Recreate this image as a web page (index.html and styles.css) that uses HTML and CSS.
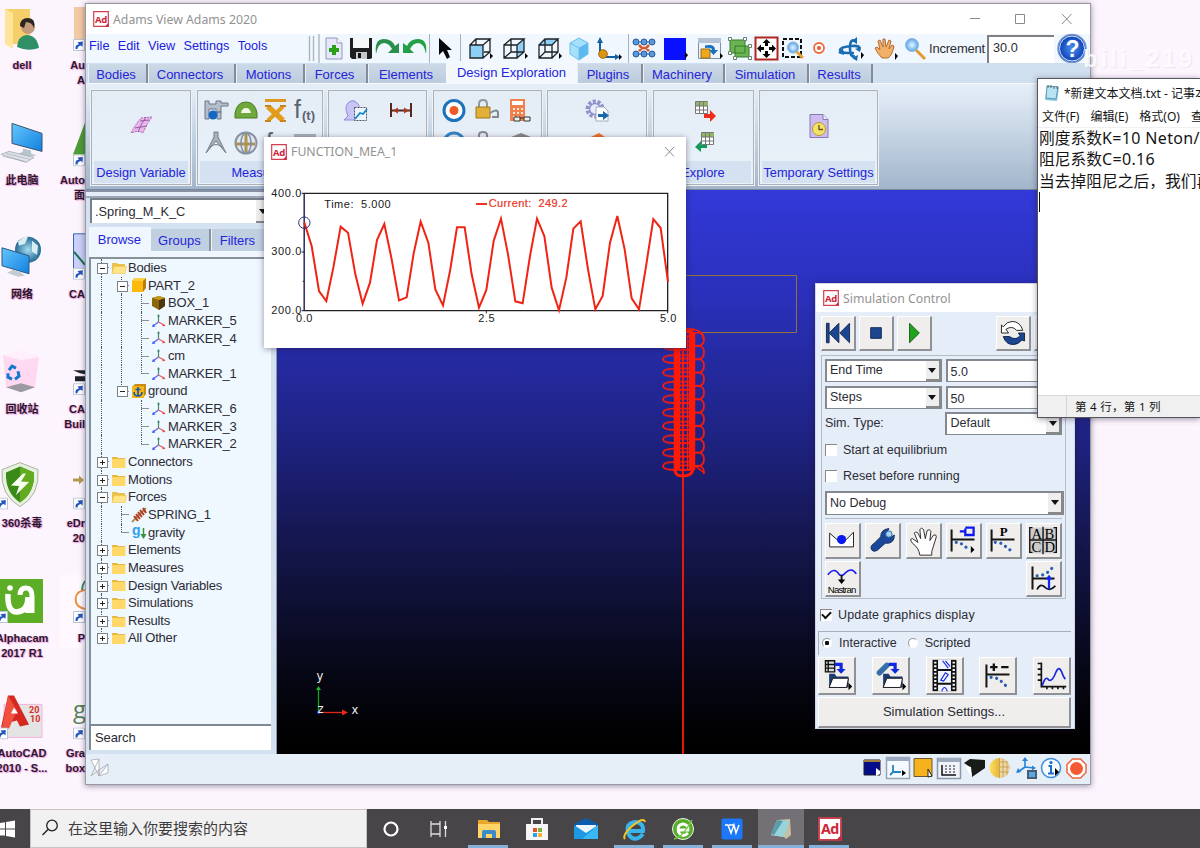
FILE: index.html
```html
<!DOCTYPE html>
<html lang="zh">
<head>
<meta charset="utf-8">
<title>Adams View Adams 2020</title>
<link rel="stylesheet" href="styles.css">
</head>
<body>
<svg class="defs" width="0" height="0">
  <defs>
    <symbol id="ad" viewBox="0 0 16 16"><path d="M.7.7h14.6v14.6H.7z" fill="#fff" stroke="#d2404f" stroke-width="1.2"/><path d="M12 15.5l3.5-3.5v3.5z" fill="#c8283c"/><text x="2" y="11.5" class="ad-text">Ad</text></symbol>
    <symbol id="folder" viewBox="0 0 17 16"><path d="M1 3h5l1 1h7v9.500H1z" fill="#e8b840"/><path d="M1 5h13.500v9H1z" fill="#ffd868"/></symbol>
    <symbol id="folder-open" viewBox="0 0 17 16"><path d="M1 3h5l1 1h7v9H1z" fill="#ecc04c"/><path d="M1 13.500L3 6.500h12.500L14 13.500z" fill="#ffe48a" stroke="#eec24e" stroke-width=".6"/></symbol>
    <symbol id="marker" viewBox="0 0 17 16"><path d="M7.500 9V2" stroke="#4a8a68" stroke-width="1.200"/><path d="M7.500 9L2 13" stroke="#5566ee" stroke-width="1.200"/><path d="M7.500 9l5.500 3" stroke="#e06060" stroke-width="1.200"/><path d="M7.500 1l1.500 2.500H6z" fill="#4a8a68"/><path d="M1 14l1-3 2.500 2.500z" fill="#4455ff"/><path d="M14.500 13l-3.500.3 1.600-2.700z" fill="#f05050"/></symbol>
    <symbol id="shortcut" viewBox="0 0 12 12"><path d="M.5.5h11v11H.5z" fill="#fff" stroke="#b8c4d8"/><path d="M2.500 10Q2 5.500 6 5.200L4.500 3.200 9.800 2.500 9.500 7.800 7.800 6.500Q4.500 7 4.500 10z" fill="#2456c0"/></symbol>
    <pattern id="coil" x="662" y="352.600" width="44" height="13.350" patternUnits="userSpaceOnUse">
      <path d="M32 6.700Q42 8 42 0M32 6.700Q42 5 42 13.350M12 2.500Q1 3 1 6.700T12 10.500M12 2.500h20M12 6h20M12 10.500h20" fill="none" stroke="#ff1a05" stroke-width="1.700"/>
    </pattern>
    <linearGradient id="gold"><stop offset="0" stop-color="#ffe060"/><stop offset="1" stop-color="#c88a10"/></linearGradient>
    <linearGradient id="screen" x2="1" y2="1"><stop offset="0" stop-color="#66c6fc"/><stop offset="1" stop-color="#1080e0"/></linearGradient>
    <radialGradient id="globe"><stop offset="0" stop-color="#a6dcf0"/><stop offset="1" stop-color="#256a94"/></radialGradient>
    <radialGradient id="help"><stop offset="0" stop-color="#4a90f0"/><stop offset="1" stop-color="#0838b0"/></radialGradient>
    <radialGradient id="lens"><stop offset="0" stop-color="#e8f6ff"/><stop offset="1" stop-color="#5aa4e8"/></radialGradient>
  </defs>
</svg>

<main class="desktop">
  <div class="shelf shelf-a">
    <div class="shortcut"><svg width="60" height="56" viewBox="-8 2 60 56"><path d="M5 9h25v35H12z" fill="#f5cf6a"/><path d="M5 9l8 4v36l-8-5z" fill="#ffe49a"/><circle cx="28" cy="27" r="7" fill="#c49a7c"/><path d="M20 26q0-8 8-8t6 10q-2-6-8-6l-2 6z" fill="#2c2622"/><path d="M17 47q1-11 9-12 11 0 13 13-11 4-22-1z" fill="#2f9068"/></svg><span>dell</span></div>
    <div class="shortcut"><svg width="60" height="56" viewBox="-8 116.600 60 56"><path d="M12 123l30 10v18l-30-8z" fill="url(#screen)" stroke="#3a556a" stroke-width="1"/><path d="M23 148l8 2v3l6 2-9 1-9-3 4-2z" fill="#b8c4cc"/><path d="M1 154l8-3 25 6-8 5z" fill="#dfe3e8" stroke="#a0a8b0" stroke-width=".8"/><path d="M6 153l24 6M3 156l22 5" stroke="#98a4b0" stroke-width=".6"/></svg><span>此电脑</span></div>
    <div class="shortcut"><svg width="60" height="56" viewBox="-8 231.200 60 56"><circle cx="28" cy="250" r="13" fill="url(#globe)"/><path d="M18 242q5-6 10-5l-3 7-6 2zM32 241l6 5-1 9-5-3z" fill="#d8ecf2"/><path d="M2 248l27 8v18l-27-8z" fill="url(#screen)" stroke="#2a5a88"/><path d="M13 270l7 2 5 4-7 1-11-4z" fill="#c4ccd2"/></svg><span>网络</span></div>
    <div class="shortcut"><svg width="60" height="56" viewBox="-8 345.800 60 56"><path d="M3 355l18-4 18 6-4 30-14 5-15-5z" fill="#ffd2f0" opacity=".85"/><path d="M3 355l18 5 18-3-18-6z" fill="#fff" opacity=".6"/><path d="M6 387l15-4 14 4-14 5z" fill="#9a9aa0"/><g fill="none" stroke="#1478d0" stroke-width="3"><path d="M9 370l3-4 4 2M18 371l1 5-4 3M12 379l-4-2v-4"/></g></svg><span>回收站</span></div>
    <div class="shortcut"><svg width="60" height="56" viewBox="-8 460.400 60 56"><path d="M20 463l18 7q2 26-18 37Q0 496 2 470z" fill="#e8f0e0" stroke="#a8b4a0"/><path d="M20 467l14 6q1 20-14 30Q5 493 6 473z" fill="#3a8a18"/><path d="M20 467l14 6q1 20-14 30z" fill="#62aa20"/><path d="M23 474l-12 12 8 .5-3 9 13-13-8-.5 5-8z" fill="#f6fff0"/><use href="#shortcut" x="-4" y="498" width="12" height="12"/></svg><span>360杀毒</span></div>
    <div class="shortcut"><svg width="60" height="56" viewBox="-8 575 60 56"><path d="M0 579h43v44H0z" fill="#5cae26"/><path d="M8 594q-1 18 9 18 11-1 11-15v16" fill="none" stroke="#fff" stroke-width="5.500"/><path d="M20 595q0-7 6-7 6 0 6 8v17" fill="none" stroke="#fff" stroke-width="5"/><circle cx="10" cy="588" r="2.800" fill="#fff"/><use href="#shortcut" x="-4" y="611" width="12" height="12"/></svg><span>Alphacam<br>2017 R1</span></div>
    <div class="shortcut"><svg width="60" height="56" viewBox="-8 689.600 60 56"><path d="M4 704h38v33H4z" fill="#e4e4e4" stroke="#f4b4dc"/><path d="M8 695l6 0 15 29-9 2-3-6-8 2-1 6-7-1z" fill="#d42820"/><path d="M8 695l-6 32 7 1 8-18z" fill="#f05040"/><path d="M11 713l3-6 4 6z" fill="#fff"/><text x="29" y="713" class="year">20</text><text x="30" y="721.500" class="year">10</text><use href="#shortcut" x="-4" y="727" width="12" height="12"/></svg><span>AutoCAD<br>2010 - S...</span></div>
  </div>
  <div class="shelf shelf-b">
    <div class="shortcut"><svg width="25" height="56" viewBox="60 2 25 56"><path d="M74 7h11v32H74z" fill="#f3c9a4"/><use href="#shortcut" x="73" y="39" width="12" height="12"/></svg><span>Au<br>A</span></div>
    <div class="shortcut"><svg width="25" height="56" viewBox="60 116.600 25 56"><path d="M85 122v32H73z" fill="#4c9c38"/><use href="#shortcut" x="73" y="154" width="12" height="12"/></svg><span>Auto<br>面</span></div>
    <div class="shortcut"><svg width="25" height="56" viewBox="60 231.200 25 56"><path d="M73.500 234h12v40h-12z" fill="#cad0fa" stroke="#3a6aac"/><path d="M74 252l11 13" stroke="#187050" stroke-width="2"/><use href="#shortcut" x="73" y="268" width="12" height="12"/></svg><span>CA</span></div>
    <div class="shortcut"><svg width="25" height="56" viewBox="60 345.800 25 56"><path d="M73 370h12v4l-5-1zM75 376h10v5H75z" fill="#1c2428"/><use href="#shortcut" x="73" y="383" width="12" height="12"/></svg><span>CA<br>Buil</span></div>
    <div class="shortcut"><svg width="25" height="56" viewBox="60 460.400 25 56"><path d="M73 479h6v-3l5 4.500-5 4.500v-3h-6z" fill="#b29a50"/><use href="#shortcut" x="73" y="498" width="12" height="12"/></svg><span>eDr<br>20</span></div>
    <div class="shortcut framed"><svg width="25" height="56" viewBox="60 575 25 56"><path d="M85 590q-11 2-9 12 1 5 9 7" fill="none" stroke="#e89040" stroke-width="2"/><path d="M85 581q-3 4-3 9" fill="none" stroke="#448a60" stroke-width="2"/><use href="#shortcut" x="73" y="611" width="12" height="12"/></svg><span>P</span></div>
    <div class="shortcut"><svg width="25" height="56" viewBox="60 689.600 25 56"><text x="73" y="718" class="big-g">g</text><use href="#shortcut" x="73" y="727" width="12" height="12"/></svg><span>Gra<br>box</span></div>
  </div>
</main>

<section class="window adams">
  <header class="titlebar">
    <svg width="16" height="16"><use href="#ad"/></svg><h1>Adams View Adams 2020</h1>
    <svg class="controls" width="130" height="30" viewBox="960 4 130 30" fill="none" stroke="#8a8a8a"><path d="M970 18.500h10M1015.500 14.500h9v9h-9zM1062 14l9.500 10M1071.500 14l-9.500 10"/></svg>
  </header>
  <div class="menubar">
    <nav class="menus"><span>File</span><span>Edit</span><span>View</span><span>Settings</span><span>Tools</span></nav>
    <div class="toolbar">
      <svg width="40" height="29" viewBox="306 34 40 29"><path d="M309.500 36v25M313.500 36v25M319 34v29" stroke="#a8b2be" stroke-width="1.300"/><path d="M326 38h11l5 5v16h-16z" fill="#e6e8fa" stroke="#9498bc"/><path d="M337 38v5h5" fill="#fff" stroke="#9498bc"/><path d="M332 45h4v3h3v4h-3v3h-4v-3h-3v-4h3z" fill="#28a018"/></svg>
      <svg width="28" height="29" viewBox="346 34 28 29"><path d="M350 38h4v10h15V38h3v20l-2 1h-18l-2-2z" fill="#1e1e20"/><path d="M353 38h16v10h-16z" fill="#f6f6f8"/><path d="M356 52h11v7h-11z" fill="#c8c8cc"/><path d="M358 53h3v5h-3z" fill="#111"/></svg>
      <svg width="28" height="29" viewBox="374 34 28 29"><path d="M376 54Q374 39 384 39q8 0 11 7l4-3v10h-11l4-4q-3-6-8-6-6 0-8 11z" fill="#28904a"/></svg>
      <svg width="30" height="29" viewBox="402 34 30 29"><path d="M426 54Q428 39 418 39q-8 0-11 7l-4-3v10h11l-4-4q3-6 8-6 6 0 8 11z" fill="#22a046"/><path d="M429.500 34v29" stroke="#a8b2be"/></svg>
      <svg width="34" height="29" viewBox="432 34 34 29"><path d="M439 38v17l4-4 4 8 3-2-3-7h5z" fill="#08090c"/><path d="M460.500 34v29" stroke="#a8b2be"/></svg>
      <svg width="34" height="29" viewBox="466 34 34 29"><path d="M470 45h13v13h-13z" fill="#8cd0f8"/><path d="M470 45h13v13h-13zM470 45l6-6h14l-7 6M490 39v13l-7 6M476 39v6M484 52h6" class="edge"/><path d="M490 53l3 3-3 3z"/></svg>
      <svg width="35" height="29" viewBox="500 34 35 29"><path d="M517 45l7-6v13l-7 6z" fill="#8cd0f8"/><path d="M504 45h13v13h-13zM504 45l7-6h13l-7 6M524 39v13l-7 6M511 39v13h13M511 52l-7 6" class="edge"/><path d="M525 53l3 3-3 3z"/></svg>
      <svg width="32" height="29" viewBox="535 34 32 29"><path d="M539 45l6-6h13l-6 6z" fill="#8cd0f8"/><path d="M539 45h13v13h-13zM539 45l6-6h13l-6 6M558 39v13l-6 6M545 39v13h13M545 52l-6 6" class="edge"/><path d="M559 53l3 3-3 3z"/></svg>
      <svg width="26" height="29" viewBox="567 34 26 29"><path d="M579 38l9 5v11l-9 6-9-6V43z" fill="#a6e0fa"/><path d="M579 48v12l9-6V43z" fill="#5cb8ee"/><path d="M570 43l9 5 9-5-9-5-9 5v11l9 6 9-6V43M579 48v12" fill="none" stroke="#68c0f0"/></svg>
      <svg width="35" height="29" viewBox="593 34 35 29"><path d="M600 54V41M603 57h14" stroke="#1460a4" stroke-width="2"/><path d="M600 37l3 6h-6zM620 57l-5-3v6z" fill="#1460a4"/><circle cx="603" cy="54" r="4.300" fill="#dc9614" stroke="#9a6810"/><path d="M619 54l3 3-3 3z"/></svg>
      <svg width="33" height="29" viewBox="628 34 33 29"><path d="M628.500 34v29" stroke="#a8b2be"/><path d="M639 45l3 3-3 3M649 45l-3 3 3 3M641 48h6" stroke="#d45830" stroke-width="2.500" fill="none"/><path d="M636 42h16M636 54h16" stroke="#24589c"/><g fill="#5a98da" stroke="#24589c"><circle cx="636" cy="42" r="3"/><circle cx="644" cy="42" r="3"/><circle cx="652" cy="42" r="3"/><circle cx="636" cy="54" r="3"/><circle cx="644" cy="54" r="3"/><circle cx="652" cy="54" r="3"/></g></svg>
      <svg width="32" height="29" viewBox="661 34 32 29"><path d="M664 38h22v22h-22z" fill="#0810ff"/><path d="M685 52l3 3-3 4z"/></svg>
      <svg width="33" height="29" viewBox="693 34 33 29"><path d="M698.500 38.500h22v20h-22z" fill="#eef4fa" stroke="#7890a8"/><path d="M698 38h23v5h-23z" fill="#b4c4d4"/><path d="M701 49h9v9h-9z" fill="#f0a81c" stroke="#986c18"/><path d="M705 45.500q10-2 10 4.500h3l-4.500 5-4.500-5h3q0-3-7-2z" fill="#1870c0"/><path d="M720 53l3 3-3 3z"/></svg>
      <svg width="28" height="29" viewBox="726 34 28 29"><path d="M730 40h15v13h-15zM735 46h14v11h-14z" fill="#6ab452" stroke="#367a2c"/><path d="M728.500 37.500h3v3h-3zM743.500 37.500h3v3h-3zM728.500 51.500h3v3h-3zM748.500 44.500h3v3h-3zM733.500 56.500h3v3h-3zM748.500 56.500h3v3h-3z" fill="#fff" stroke="#678068"/></svg>
      <svg width="26" height="29" viewBox="754 34 26 29"><path d="M755.500 37.500h22v22h-22z" fill="#fff" stroke="#b22620" stroke-width="2"/><path d="M766.500 39l4 4h-2.500v3h-3v-3h-2.500zM766.500 58l4-4h-2.500v-3h-3v3h-2.500zM757 48.500l4-4v2.500h3v3h-3v2.500zM776 48.500l-4-4v2.500h-3v3h3v2.500z"/></svg>
      <svg width="28" height="29" viewBox="780 34 28 29"><path d="M783 39h18v18h-18z" fill="#eef6fc" stroke="#111" stroke-width="2" stroke-dasharray="4 2"/><path d="M796 51l7 7" stroke="#e8a438" stroke-width="3"/><circle cx="793" cy="47.500" r="5.500" fill="url(#lens)" stroke="#88b4dc"/></svg>
      <svg width="24" height="29" viewBox="808 34 24 29"><circle cx="819" cy="48" r="5" fill="#fff" stroke="#ee6a3c" stroke-width="1.800"/><circle cx="819" cy="48" r="2" fill="#e8582a"/></svg>
      <svg width="38" height="29" viewBox="832 34 38 29"><path d="M855 41q-5-3-5 7t5 8M859 50q2-5-7-4-12 1-12 4 0 3 8 3h6" fill="none" stroke="#1a6cb0" stroke-width="2.600"/><path d="M852 41l5-4v7zM838 53l5-5 1 7zM852 58l6-3-1 6zM861 47l-1 5-5-3z" fill="#1a6cb0"/><path d="M861 52l3 3-3 4z"/></svg>
      <svg width="30" height="29" viewBox="870 34 30 29"><path d="M882 58q-5-5-7-10l2-1 3 3-2-9 2-1 3 7v-8h2l1 8 3-7 2 1-2 8 3-4 2 1q-2 10-6 12z" fill="#f0b068" stroke="#b46c34"/><path d="M895 53l3 3-3 4z"/></svg>
      <svg width="28" height="29" viewBox="900 34 28 29"><path d="M916 50l9 9" stroke="#e49a30" stroke-width="3"/><circle cx="912" cy="45" r="6.500" fill="url(#lens)" stroke="#88b8e4"/></svg>
      <label>Increment</label><span class="increment">30.0</span>
      <svg width="34" height="31" viewBox="1054 33 34 31"><circle cx="1072" cy="48.500" r="14" fill="url(#help)" stroke="#7494cc" stroke-width="1.500"/><circle cx="1072" cy="48.500" r="12.500" fill="none" stroke="#dceaff" stroke-width="1"/><text x="1065.500" y="56.500" class="question">?</text></svg>
    </div>
  </div>
  <nav class="tabs"><span class="w60">Bodies</span><span class="w88">Connectors</span><span class="w68">Motions</span><span class="w63">Forces</span><span class="w77 last">Elements</span><span class="w131 active">Design Exploration</span><span class="w66">Plugins</span><span class="w82">Machinery</span><span class="w84">Simulation</span><span class="w65">Results</span></nav>
  <div class="ribbon">
    <div class="panel p100"><svg width="98" height="70" viewBox="92 91 98 70"><path d="M131 133q4-8 10-15l11-1q-6 8-9 16-5-3-12 0z" fill="#e8b8ea" stroke="#a866b0" stroke-dasharray="2 1"/><path d="M135 128l12-2M140 121l9-1M138 132q3-8 8-15" stroke="#9858a4" fill="none"/></svg><h2>Design Variable</h2></div>
    <div class="panel p126"><svg width="124" height="70" viewBox="197 91 124 70"><g fill="#b4bdca" stroke="#6c7688"><path d="M204 101h4v3h7v-3h5v2h7v3h-7v6h-5v-3h-7v10h-4zM216 112h4v7h-4z"/></g><circle cx="212" cy="115" r="4.500" fill="#1468c4"/><path d="M234 118v-5q2-11 11-11t11 11v5z" fill="#70a83c" stroke="#4a7c24"/><path d="M240 113q1-5 5-5t5 5z" fill="#f2f8ea"/><path d="M264 99h21v3h-21z" fill="#dc9820"/><path d="M267 106.500l15 14" stroke="#e29c1c" stroke-width="5.500"/><path d="M282 106.500l-15 14" stroke="#e29c1c" stroke-width="4"/><path d="M264 106h6M279 106h6M264 121h6M279 121h6" stroke="#c8861a" stroke-width="2"/><text x="293" y="118" class="fx">f</text><text x="301" y="120" class="ft">(t)</text><path d="M213 132h4v5l8 16-10-12-10 12 8-16z" fill="#a8b0ba" stroke="#747e88"/><path d="M209 147q6-5 12 0" fill="none" stroke="#747e88"/><circle cx="245" cy="143" r="10.500" fill="#e4e8ee" stroke="#8692a2" stroke-width="2"/><path d="M235 144h19M245 133v19" stroke="#ac9254" stroke-width="3"/><ellipse cx="245" cy="143" rx="5" ry="10" fill="none" stroke="#8090a8" stroke-width="1.500"/><text x="265" y="151" class="fx">f</text><path d="M293 134h22v6h-22z" fill="#a8b0b8"/></svg><h2>Measures</h2></div>
    <div class="panel p99"><svg width="97" height="70" viewBox="329 91 97 70"><path d="M344 120l4-4q-4-9 0-13 4-4 8-1 6 4 1 11l3 7z" fill="#c9c4f8" stroke="#8e8cd8"/><path d="M354.500 107.500h12v13h-12z" fill="#ecf5fc" stroke="#555" stroke-dasharray="2 1"/><path d="M355 119l5-6 3 1 4-5" fill="none" stroke="#1686cc" stroke-width="1.800"/><path d="M391 103v14M411 103v14M392 110.500h18" stroke="#55281c" stroke-width="2"/><path d="M393 110.500l5-3v6zM409 110.500l-5-3v6z" fill="#ac3820"/></svg><h2></h2></div>
    <div class="panel p109"><svg width="107" height="70" viewBox="434 91 107 70"><circle cx="454" cy="110.500" r="10" fill="#fff" stroke="#1e72b8" stroke-width="3"/><circle cx="454" cy="110.500" r="4.500" fill="#ee5a26"/><path d="M479 108v-4q0-4 4-4t4 4v4" fill="none" stroke="#90989c" stroke-width="2"/><path d="M476 107h14v11h-14z" fill="#e0b038" stroke="#a07820"/><path d="M490 113q8-5 8 0v4h-6" fill="none" stroke="#808a90" stroke-width="2"/><path d="M510 99h15v22h-15z" fill="#f0814c"/><path d="M512 101h11v4h-11z" fill="#fff"/><path d="M513 109h10M513 113h10M513 117h7" stroke="#ffe8d8" stroke-width="2" stroke-dasharray="2 2"/><path d="M514 117h6v4h-6zM524 117h6v4h-6zM520 118h4" fill="#eee" stroke="#333"/><circle cx="454" cy="143" r="10" fill="#e8f4fc" stroke="#3284c4" stroke-width="3"/><path d="M479 139v-4q0-3 4-3t4 3v4" fill="none" stroke="#889" stroke-width="2"/><path d="M511 137l10-4 10 4z" fill="#888"/></svg><h2></h2></div>
    <div class="panel p100"><svg width="98" height="70" viewBox="548 91 98 70"><circle cx="595" cy="109" r="7.500" fill="none" stroke="#8c92cc" stroke-width="4" stroke-dasharray="3 1.700"/><circle cx="595" cy="109" r="5.500" fill="#e8ecfc" stroke="#8c92cc" stroke-width="1.500"/><path d="M596 107h8l4 4v10h-12z" fill="#fff" stroke="#a4acbc"/><path d="M598 114h5v-3l6 4.500-6 4.500v-3h-5z" fill="#1868b0"/><path d="M591 137l8-4 6 4z" fill="#ec7428"/></svg><h2></h2></div>
    <div class="panel p101"><svg width="99" height="70" viewBox="653 91 99 70"><path d="M694.500 101.500h12v12h-12z" fill="#fff" stroke="#777"/><path d="M695 102h12v4h-12z" fill="#8eb864"/><path d="M698.500 102v12M702.500 102v12M694 106h13M694 110h13" stroke="#777"/><path d="M703 114h6v-4l6 6-6 6v-4h-6z" fill="#ed2d1c"/><path d="M700.500 132.500h12v12h-12z" fill="#fff" stroke="#777"/><path d="M701 133h12v4h-12z" fill="#8eb864"/><path d="M704.500 133v12M708.500 133v12M700 137h13M700 141h13" stroke="#777"/><path d="M706 145h-6v-4l-6 6 6 5v-4h6z" fill="#109c5a"/></svg><h2>Explore</h2></div>
    <div class="panel p119"><svg width="117" height="70" viewBox="759 91 117 70"><path d="M809 114.500h13l5 5v18h-18z" fill="#cdbbf2" stroke="#8678b0"/><path d="M822 114.500v5h5" fill="#f0eaff" stroke="#8678b0"/><circle cx="818" cy="129" r="6.500" fill="#f4e268" stroke="#b49a30"/><path d="M818 125v4.500h4" fill="none" stroke="#66541a" stroke-width="1.300"/></svg><h2>Temporary Settings</h2></div>
  </div>
  <div class="workspace">
    <aside class="browser">
      <div class="grip"></div>
      <div class="model"><span>.Spring_M_K_C</span><b></b></div>
      <nav class="side-tabs"><span class="active">Browse</span><span>Groups</span><span>Filters</span></nav>
      <ul class="tree">
        <li><i class="tee minus"></i><svg><use href="#folder-open"/></svg>Bodies</li>
        <li><i class="line"></i><i class="tee minus"></i><svg viewBox="0 0 17 16"><path d="M1 4l3-3h11v10l-3 4H1z" fill="#b87c08"/><path d="M1 4h11v11H1z" fill="#ffb90c"/><path d="M1 4l3-3h11l-3 3z" fill="#ffd040"/></svg>PART_2</li>
        <li><i class="line"></i><i class="line"></i><i class="tee"></i><svg viewBox="0 0 17 16"><path d="M1 3l7-2 6 2v8l-6 4-7-4z" fill="#8c6608"/><path d="M8 5l6-2v8l-6 4z" fill="#4c380c"/><path d="M1 3l7-2 6 2-6 2z" fill="#c89818"/></svg>BOX_1</li>
        <li><i class="line"></i><i class="line"></i><i class="tee"></i><svg><use href="#marker"/></svg>MARKER_5</li>
        <li><i class="line"></i><i class="line"></i><i class="tee"></i><svg><use href="#marker"/></svg>MARKER_4</li>
        <li><i class="line"></i><i class="line"></i><i class="tee"></i><svg><use href="#marker"/></svg>cm</li>
        <li><i class="line"></i><i class="line"></i><i class="ell"></i><svg><use href="#marker"/></svg>MARKER_1</li>
        <li><i class="line"></i><i class="ell minus"></i><svg viewBox="0 0 17 16"><path d="M1 4l3-3h11v10l-3 4H1z" fill="#c88c10"/><path d="M1 3h12v12H1z" fill="#f4b41c"/><path d="M7 4v9M4.500 6.500h5M3 9q0 4 4 4t4-4" fill="none" stroke="#1458a8" stroke-width="1.600"/></svg>ground</li>
        <li><i class="line"></i><i></i><i class="tee"></i><svg><use href="#marker"/></svg>MARKER_6</li>
        <li><i class="line"></i><i></i><i class="tee"></i><svg><use href="#marker"/></svg>MARKER_3</li>
        <li><i class="line"></i><i></i><i class="ell"></i><svg><use href="#marker"/></svg>MARKER_2</li>
        <li><i class="tee plus"></i><svg><use href="#folder"/></svg>Connectors</li>
        <li><i class="tee plus"></i><svg><use href="#folder"/></svg>Motions</li>
        <li><i class="tee minus"></i><svg><use href="#folder-open"/></svg>Forces</li>
        <li><i class="line"></i><i class="tee"></i><svg viewBox="0 0 17 16"><path d="M1 15L15 1" stroke="#a89060" stroke-width="2"/><path d="M3 9l4 5M5 7l4 5M7 5l4 5M9 3l4 5M12 1l3 5" stroke="#b03818" stroke-width="2"/></svg>SPRING_1</li>
        <li><i class="line"></i><i class="ell"></i><svg viewBox="0 0 17 16"><text x="1" y="11" class="tiny-g">g</text><path d="M12.500 4v9" stroke="#38903c" stroke-width="1.500"/><path d="M9.500 10h6l-3 5z" fill="#38903c"/></svg>gravity</li>
        <li><i class="tee plus"></i><svg><use href="#folder"/></svg>Elements</li>
        <li><i class="tee plus"></i><svg><use href="#folder"/></svg>Measures</li>
        <li><i class="tee plus"></i><svg><use href="#folder"/></svg>Design Variables</li>
        <li><i class="tee plus"></i><svg><use href="#folder"/></svg>Simulations</li>
        <li><i class="tee plus"></i><svg><use href="#folder"/></svg>Results</li>
        <li><i class="ell plus"></i><svg><use href="#folder"/></svg>All Other</li>
      </ul>
      <div class="search">Search</div>
    </aside>
    <svg class="viewport" width="813" height="564" viewBox="277 190 813 564">
      <path d="M570 275.500h226.500v57H570" fill="none" stroke="#94703f"/>
      <path d="M662 332h44v142h-44z" fill="url(#coil)"/>
      <path d="M683 329h9q12 2 11 10M694 465l9 7" fill="none" stroke="#ff1a05" stroke-width="1.500"/>
      <path d="M677 332v138M692 332v138" stroke="#ff1a05" stroke-width="6.500"/>
      <path d="M683 330v424" stroke="#ff1a05" stroke-width="1.800"/><path d="M687.500 335v135" stroke="#ff1a05"/>
      <path d="M675 470q0 6 8 6t10-6M677 331h16" fill="none" stroke="#ff1a05" stroke-width="3"/>
      <path d="M318.500 712v-24" stroke="#18a020" stroke-width="1.300"/><path d="M316 690l2.500-4 2.500 4z" fill="#20b828"/>
      <path d="M319 712.500h25" stroke="#e02818" stroke-width="1.300"/><path d="M342 709.500l6 3-6 3z" fill="#e82818"/><path d="M317 711h3v3h-3z" fill="#1824d0"/>
      <text x="316.500" y="680" class="axis">y</text><text x="351.500" y="714" class="axis">x</text><text x="317.500" y="713" class="axis">z</text>
    </svg>
  </div>
  <footer class="status">
    <svg width="30" height="28" viewBox="87 755 30 28"><path d="M91 760l8 16V759zM91 776l8-17M99 776l9-12v9zM91 776l8-6 9-6M99 769v7" fill="#fff" stroke="#a8a8b0" stroke-width=".8"/></svg>
    <div class="status-icons">
      <svg width="24" height="28" viewBox="861 755 24 28"><path d="M864 760h16v15h-16z" fill="#040c8c" stroke="#221c24"/><path d="M864 761h16" stroke="#d0a028" stroke-width="1.500"/><path d="M876 768v8l4-2v-3z" fill="#fff"/></svg>
      <svg width="26" height="28" viewBox="885 755 26 28"><path d="M886.500 757.500h23v21h-23z" fill="#f4faff" stroke="#98a4b8" stroke-width="1.500"/><path d="M886 757h24v4h-24z" fill="#9aa8c0"/><path d="M893 765v7h8M893 772l-3 3" fill="none" stroke="#2484c0" stroke-width="1.800"/><path d="M902 770l4 3-4 3z"/></svg>
      <svg width="25" height="28" viewBox="911 755 25 28"><path d="M914 758.500h18v18h-18z" fill="#f6b21c" stroke="#6c5830"/><path d="M928 769v8l4-1z" fill="#fff" stroke="#222"/></svg>
      <svg width="27" height="28" viewBox="936 755 27 28"><path d="M937.500 758.500h23v20h-23z" fill="#f0f4fa" stroke="#8c98ac" stroke-width="1.500"/><path d="M938 758h22v4h-22z" fill="#9ca8bc"/><path d="M942 765v10h14" fill="none" stroke="#111" stroke-width="1.500"/><path d="M945 766h11M945 769h11M945 772h11" stroke="#222" stroke-width="1.200" stroke-dasharray="2 2"/></svg>
      <svg width="25" height="28" viewBox="963 755 25 28"><path d="M964 763l6-4 15 1v8l-13 9-2-10z" fill="#181c18"/><path d="M965 766l6 1 1 10-4-6z" fill="#fff"/></svg>
      <svg width="25" height="28" viewBox="988 755 25 28"><circle cx="999.500" cy="768" r="10" fill="url(#gold)"/><path d="M999.500 758a10 10 0 010 20z" fill="#ead8a8"/><path d="M999.500 758v20M1000 762h7M1000 767h9M1000 772h8M1003 759v18M1007 761v14" stroke="#c89a48" stroke-width=".8"/></svg>
      <svg width="26" height="28" viewBox="1013 755 26 28"><path d="M1025 768v-8M1025 767l9 1M1025 767l-7 5" stroke="#2484d8" stroke-width="1.600"/><path d="M1025 757l3 4h-6zM1036 768l-4 2.500v-5zM1016 773l2-5 3 4z" fill="#2484d8"/><path d="M1027 770h10v9h-10z" fill="#4c5c70"/><path d="M1029 772h6v5h-6z" fill="#58a8e8"/></svg>
      <svg width="25" height="28" viewBox="1039 755 25 28"><circle cx="1051" cy="768" r="9.500" fill="#f8fcff" stroke="#3c90dc" stroke-width="1.500"/><path d="M1048.500 766h2.500v7.500M1048 773.500h6" fill="none" stroke="#1870cc" stroke-width="2"/><circle cx="1051" cy="762.500" r="1.600" fill="#1870cc"/><path d="M1055 768l4 4-4 4z"/></svg>
      <svg width="25" height="28" viewBox="1064 755 25 28"><path d="M1072.500 759h8l5.500 5.500v8l-5.500 5.500h-8l-5.500-5.500v-8z" fill="#fff" stroke="#ec6644" stroke-width="1.500"/><circle cx="1076.500" cy="768.500" r="6.500" fill="#f25c34"/></svg>
    </div>
  </footer>
</section>

<section class="window measure">
  <header class="titlebar"><svg width="16" height="16"><use href="#ad"/></svg><h1>FUNCTION_MEA_1</h1><svg class="controls" width="40" height="28" viewBox="646 138 40 28"><path d="M665 147l9 9.500M674 147l-9 9.500" stroke="#8c8c8c"/></svg></header>
  <svg class="plot" width="422" height="182" viewBox="0 90 1266 546">
    <path d="M121 172h1090v352H121z" fill="none" stroke="#222" stroke-width="4"/>
    <path d="M121 172v352" stroke="#35356a" stroke-width="4"/>
    <path d="M113 172h8M113 348h8M116 436h5M113 524h8M667 524v8M1211 524v8" stroke="#222" stroke-width="3"/>
    <polyline points="121,260 143,330 165,465 187,495 208,395 230,272 252,290 274,415 296,503 318,440 339,312 361,264 383,370 405,493 428,484 449,352 470,257 493,320 514,460 537,508 558,405 579,274 602,274 623,415 645,515 667,462 689,315 711,248 732,355 754,496 776,502 798,360 819,248 841,300 863,455 885,523 907,425 928,278 950,256 972,400 994,520 1016,480 1038,320 1060,240 1082,340 1103,487 1125,520 1147,385 1168,249 1190,276 1212,438" fill="none" stroke="#f02414" stroke-width="6"/>
    <circle cx="121" cy="260" r="17" fill="none" stroke="#303070" stroke-width="3"/>
    <g class="plot-text"><text x="22" y="182" textLength="90">400.0</text><text x="22" y="358" textLength="90">300.0</text><text x="22" y="535" textLength="90">200.0</text><text x="96" y="558" textLength="49">0.0</text><text x="643" y="558" textLength="49">2.5</text><text x="1188" y="558" textLength="49">5.0</text><text x="181" y="217" textLength="199" xml:space="preserve">Time:  5.000</text>
    <g fill="#ee3424" stroke="#ee3424"><path d="M636 204h33" stroke-width="6"/><text x="674" y="214" textLength="237" xml:space="preserve" stroke-width=".6">Current:  249.2</text></g></g>
  </svg>
</section>

<section class="window simulation">
  <header class="titlebar"><svg width="16" height="16"><use href="#ad"/></svg><h1>Simulation Control</h1></header>
  <div class="sim-body">
    <div class="transport">
      <button><svg viewBox="0 0 36 36"><path d="M5 7h3v22H5zM19 7v22L8 18zM31 7v22L20 18z" fill="#1c4690" stroke="#0c2450"/></svg></button>
      <button><svg viewBox="0 0 36 36"><path d="M12 12h12v12H12z" fill="#1c4690" stroke="#0c2450"/></svg></button>
      <button><svg viewBox="0 0 36 36"><path d="M13 7l11 11-11 11z" fill="#1fa51c" stroke="#14501a"/></svg></button>
      <button class="reload"><svg viewBox="0 0 36 36"><path d="M5 9v9h8l-3-4q7-5 12 1h7Q26 5 17 5 11 5 7 11z" fill="#fff" stroke="#111"/><path d="M31 27v-9h-7l2 3q-5 6-12 1H7q3 9 11 9 6 0 10-5z" fill="#1c4690" stroke="#0c2040"/></svg></button>
      <button></button>
    </div>
    <div class="options">
      <div class="pair"><div class="combo"><span>End Time</span><b></b></div><div class="field">5.0</div></div>
      <div class="pair"><div class="combo"><span>Steps</span><b></b></div><div class="field">50</div></div>
      <div class="pair"><span class="caption">Sim. Type:</span><div class="combo"><span>Default</span><b></b></div></div>
      <div class="check"><i></i>Start at equilibrium</div>
      <div class="check"><i></i>Reset before running</div>
      <div class="combo wide"><span>No Debug</span><b></b></div>
      <div class="tools">
        <button><svg viewBox="0 0 36 36"><path d="M4 10l8 7h10l8-8v16H4z" fill="#fff" stroke="#111"/><circle cx="17" cy="17" r="5" fill="#0818f0"/></svg></button>
        <button><svg viewBox="0 0 36 36"><path d="M6 28q-2-4 3-7l7-7q0-8 9-9l-3 6 4 4 5-3q0 10-10 9l-9 8q-4 2-6-1z" fill="#1c489c" stroke="#142c58"/><circle cx="25" cy="11" r="3.500" fill="#a8d4f4" stroke="#2860a0"/></svg></button>
        <button><svg viewBox="0 0 36 36"><path d="M14 34q-1-8-8-13-4-5 0-5l6 4-4-10q1-3 4 0l3 6-1-10q2-3 4 0l2 10 2-9q3-2 4 1l-1 10 4-6q3-1 3 2l-5 16v4z" fill="#fff" stroke="#222"/></svg></button>
        <button><svg viewBox="0 0 36 36"><path d="M5 6v24M5 17h25" class="ink"/><path d="M14 8h7M20 5v7h9V4h-9" fill="none" stroke="#1018f0" stroke-width="2.500"/><path class="dots" d="M10 20l5 1 5 4 4 2"/><path d="M26 24l4 4-4 4z"/></svg></button>
        <button><svg viewBox="0 0 36 36"><path d="M5 6v24M5 17h25" class="ink"/><text x="14" y="13" class="serif">P</text><path class="dots" d="M9 20l6 1 6 4 5 4"/></svg></button>
        <button><svg viewBox="0 0 36 36"><path d="M3 4h29v28H3z" fill="#ccc"/><path d="M17.500 3v30M3 17.500h29M6 4H3v27h3M29 4h3v27h-3" fill="none" stroke="#111" stroke-width="1.500"/><g class="abcd"><text x="5" y="16">A</text><text x="19" y="16">B</text><text x="5" y="30">C</text><text x="19" y="30">D</text></g></svg></button>
        <button><svg viewBox="0 0 36 36"><path d="M2 14q7-9 12-1 3 4 7-1 7-7 12 1" fill="none" stroke="#1818f0" stroke-width="1.800"/><path d="M17 14v6" stroke="#111" stroke-width="2"/><path d="M13 19h8l-4 5z"/><text x="2" y="34" textLength="31" class="nastran">Nastran</text></svg></button>
        <button class="last-tool"><svg viewBox="0 0 36 36"><path d="M6 5v25M6 18h24" class="ink"/><path class="dots" d="M11 15l6-1 6-3 5-5"/><path d="M11 30q3-7 8-3 5 6 12-1" fill="none" stroke="#111" stroke-width="2"/><path d="M24 30V17" stroke="#1028f0" stroke-width="2.500"/><path d="M20 19h8l-4-5z" fill="#1028f0"/></svg></button>
      </div>
    </div>
    <div class="check update"><i class="on"></i>Update graphics display</div>
    <div class="mode"><i class="chosen"></i><span>Interactive</span><i></i><span>Scripted</span></div>
    <div class="outputs">
      <button><svg viewBox="0 0 38 38"><path d="M7 3h10v12H7zM10 3v12M7 7h10M7 11h10" fill="#ddd" stroke="#111" stroke-width="1.500"/><path d="M17 7h7v6" fill="none" stroke="#1028e0" stroke-width="3.500"/><path d="M19 12h10l-5 5z" fill="#1028e0"/><path d="M11 17h6l2 3h13v12H11z" fill="#1c3c74"/><path d="M11 32l4-10h17l-2 10z" fill="#fff" stroke="#111"/><path d="M32 27l4 4-4 4z"/></svg></button>
      <button><svg viewBox="0 0 38 38"><path d="M7 16l8-8" stroke="#386ea8" stroke-width="6" stroke-linecap="round"/><path d="M17 7h7v6" fill="none" stroke="#1028e0" stroke-width="3.500"/><path d="M19 12h10l-5 5z" fill="#1028e0"/><path d="M11 17h6l2 3h13v12H11z" fill="#1c3c74"/><path d="M11 32l4-10h17l-2 10z" fill="#fff" stroke="#111"/><path d="M32 27l4 4-4 4z"/></svg></button>
      <button><svg viewBox="0 0 38 38"><path d="M6 2h26v34H6z" fill="#111"/><path d="M12 2h14v10H12zM12 14h14v13H12zM12 29h14v7H12z" fill="#f0f4ff"/><path d="M9 4v31M29 4v31" stroke="#fff" stroke-width="2.500" stroke-dasharray="2 2"/><path d="M17 3l6 8M20 3l5 6M15 24l5-8 3 2-5 7z" fill="none" stroke="#1828e0" stroke-width="1.300"/><path d="M16 36q3-8 6 0" fill="none" stroke="#1828e0" stroke-width="1.300"/></svg></button>
      <button><svg viewBox="0 0 38 38"><path d="M7 7v25M7 18h25" class="ink"/><path d="M15 6v8M11 10h8M23 10h8" stroke="#111" stroke-width="2.500"/><path class="dots" d="M12 21l6 1 6 4 5 5"/></svg></button>
      <button><svg viewBox="0 0 38 38"><path d="M8 5v26h27M4 6h4M4 12h4M4 18h4M4 24h4M14 31v3M20 31v3M26 31v3M32 31v3" fill="none" stroke="#111" stroke-width="1.800"/><path d="M9 30q4-12 7-6 4 2 8-9 3-7 6 0 2 6 4 8" fill="none" stroke="#1828e0" stroke-width="1.800"/></svg></button>
    </div>
    <button class="settings">Simulation Settings...</button>
  </div>
</section>

<section class="window notepad">
  <header><svg width="17" height="18" viewBox="0 0 17 18"><path d="M3 2l12 1-2 14-12-1z" fill="#86c4dc"/><path d="M3 2l11 1-2 12-10-1z" fill="#b8e4f2" stroke="#5a9ab4"/><path d="M4 1v3M7 1v3M10 2v3M13 2v3" stroke="#667"/></svg><h1>*新建文本文档.txt - 记事本</h1></header>
  <nav><span>文件(F)</span><span>编辑(E)</span><span>格式(O)</span><span>查</span></nav>
  <div class="note"><p>刚度系数<span>K=10 Neton/</span></p><p>阻尼系数<span>C=0.16</span></p><p>当去掉阻尼之后，我们再</p><i class="caret"></i></div>
  <footer><span>第 4 行，第 1 列</span></footer>
</section>

<div class="watermark">bili_219</div>

<footer class="taskbar">
  <svg width="30" height="39" viewBox="0 809 30 39"><path d="M0 823l5-.8v6.300H0zM6 822l9-1.500v8H6zM0 829.500h5v6H0zM6 829.500h9v8L6 836z" fill="#fff"/></svg>
  <div class="taskbar-search"><svg width="18" height="18" viewBox="0 0 18 18"><circle cx="11" cy="6.500" r="5.300" fill="none" stroke="#222" stroke-width="1.300"/><path d="M7 10.500L1.500 16" stroke="#222" stroke-width="1.500"/></svg><span>在这里输入你要搜索的内容</span></div>
  <div class="apps">
    <i><svg viewBox="0 0 24 24"><circle cx="12" cy="12" r="6.500" fill="none" stroke="#fff" stroke-width="2.200"/></svg></i>
    <i><svg viewBox="0 0 24 24"><path d="M3 4v3h9V4M3 20v-3h9v3M3 7v10M12 7v10M17.500 4v16" fill="none" stroke="#ddd" stroke-width="1.300"/><path d="M16 9h3v3h-3z" fill="#fff"/></svg></i>
    <i class="open"><svg viewBox="0 0 24 24"><path d="M1 3h9l2 2h11v15H1z" fill="#e9a82c"/><path d="M1 7h22v14H1z" fill="#ffd468"/><path d="M5 21v-6q0-2 2-2h10q2 0 2 2v6h-4v-4H9v4z" fill="#3c8ccc"/></svg></i>
    <i><svg viewBox="0 0 24 24"><path d="M7 8V2h10v6" fill="none" stroke="#eee" stroke-width="2"/><path d="M1 7h22v16H1z" fill="#f6f6f6"/><path d="M8 11h4v4H8z" fill="#e8502c"/><path d="M13 11h4v4h-4z" fill="#78b43c"/><path d="M8 16h4v4H8z" fill="#28a4e8"/><path d="M13 16h4v4h-4z" fill="#f8b42c"/></svg></i>
    <i><svg viewBox="0 0 24 24"><path d="M0 7l12-6 12 6v6H0z" fill="#0c5cac"/><path d="M2 8h20v9H2z" fill="#eef6fc"/><path d="M0 8l12 8 12-8v14H0z" fill="#1c98e4"/><path d="M24 8v14H8z" fill="#38b8f4"/></svg></i>
    <i class="open"><svg viewBox="0 0 24 24"><path d="M20 17q-8 9-14 1-5-12 7-13 8 1 7 9H7" fill="none" stroke="#38b4ec" stroke-width="4"/><path d="M2 22q-3-3 6-12Q21-1 22 5" fill="none" stroke="#f2c42c" stroke-width="2"/></svg></i>
    <i class="open"><svg viewBox="0 0 24 24"><circle cx="12" cy="12" r="10.500" fill="#58ac2c" stroke="#eef8e4"/><path d="M17 16q-5 5-9 0-3-8 4-9 6 1 5 6H7" fill="none" stroke="#fff" stroke-width="2.800"/><path d="M3 22q8-1 18-19" fill="none" stroke="#78cc3c" stroke-width="1.500"/></svg></i>
    <i class="open"><svg viewBox="0 0 24 24"><rect x="1.500" y="1.500" width="21" height="21" rx="2" fill="#1c78fa"/><path d="M5 8h3l3 8 3-8 2 8 3-8M9 8h5" fill="none" stroke="#fff" stroke-width="1.500"/></svg></i>
    <i class="open current"><svg viewBox="0 0 24 24"><path d="M8 3l13-1 1 16-5 4-2-2-13-2z" fill="#c8c0a4"/><path d="M8 3l12 1-5 16-13-2z" fill="#98d4dc"/><path d="M8 3l6 1-9 14-3-1z" fill="#5c9caa"/></svg></i>
    <i class="open"><svg viewBox="0 0 16 16"><use href="#ad"/></svg></i>
  </div>
</footer>
</body>
</html>
```
FILE: styles.css
```css
* { box-sizing: border-box; }
body { margin: 0; width: 1200px; height: 848px; overflow: hidden; position: relative; background: #fdf5fe; font-family: "Liberation Sans", Arial, "Noto Sans CJK SC", sans-serif; font-size: 13px; color: #2c2c34; }
svg { display: block; flex: none; }
.defs { position: absolute; }
h1, h2, p, ul { margin: 0; padding: 0; font-weight: normal; list-style: none; }
i { font-style: normal; }
button { padding: 0; font: inherit; color: inherit; }

/* desktop */
.shelf { position: absolute; top: 2px; display: flex; flex-direction: column; }
.shelf-a { left: -8px; width: 60px; }
.shelf-b { left: 60px; width: 25px; }
.shortcut { height: 114.6px; display: flex; flex-direction: column; align-items: center; }
.shortcut span { font: bold 11px/15px "Liberation Sans", "Noto Sans CJK SC", sans-serif; color: #271927; text-shadow: 1px 1px 1px #f29ce4, -1px 0 1px #f8bcee; text-align: center; white-space: nowrap; }
.shelf-b .shortcut { align-items: flex-end; }
.shelf-b span { text-align: right; }
.shelf-b .framed { background: linear-gradient(#fff9ff, #fff9ff) 0 0 / 25px 73px no-repeat; }
.year { font: bold 9px Roboto, sans-serif; fill: #d83028; }
.big-g { font: 24px "Open Sans", sans-serif; fill: #56845c; }

/* windows */
.window { position: absolute; display: flex; flex-direction: column; background: #fff; box-shadow: 0 1px 6px rgba(30, 20, 50, .45); }
.titlebar { display: flex; align-items: center; background: #fff; flex: none; }
.titlebar h1 { font: 12.300px "Noto Sans", sans-serif; color: #929292; white-space: nowrap; }
.controls { margin-left: auto; }
.ad-text { font: bold 9.500px "Open Sans", sans-serif; fill: #cc2438; letter-spacing: -.4px; }

.adams { left: 85px; top: 3px; width: 1006px; height: 782px; border: 1px solid #9a9aa4; background: #e5edf8; }
.adams > .titlebar { height: 30px; padding-left: 7px; gap: 4px; }
.menubar { height: 29px; background: #f0f7fe; display: flex; flex: none; }
.menus { width: 220px; display: flex; gap: 8.300px; padding: 0 0 5px 3px; align-items: center; color: #2020dc; font-size: 12.700px; }
.toolbar { display: flex; align-items: center; flex: 1; }
.toolbar label { font-size: 13px; width: 59px; padding-left: 1px; letter-spacing: -.2px; }
.increment { width: 67px; height: 28px; line-height: 23px; padding-left: 4px; font-size: 12.700px; background: #fff; border: solid #808080; border-width: 2px 0 0 2px; }
.edge { fill: none; stroke: #1e2226; stroke-width: 1.300; }
.question { font: bold 23px "Liberation Sans", sans-serif; fill: #fff; }
.tabs { height: 21px; flex: none; display: flex; align-items: flex-end; padding-left: 2px; background: #d0dfef; color: #2424da; border-bottom: 1px solid #f4f8fc; }
.tabs span { height: 19px; line-height: 22px; padding-right: 3px; text-align: center; background: linear-gradient(#ccd9e7, #bccbdd); border-right: 2px solid #858c98; border-left: 1px solid #e8f0f8; white-space: nowrap; }
.tabs .last { border-right: 0; }
.tabs .active { height: 22px; padding: 0; line-height: 24px; background: #f3f8fe; border: 0; }
.w60 { width: 60px; } .w88 { width: 88px; } .w68 { width: 69px; } .w63 { width: 63px; } .w77 { width: 78px; } .w131 { width: 131px; } .w66 { width: 66px; } .w82 { width: 82px; } .w84 { width: 84px; } .w65 { width: 64px; }
.ribbon { height: 106px; flex: none; display: flex; gap: 5.500px; padding: 6px 5px; background: linear-gradient(#e6eff8, #c4d3e3 50%, #a2b5ca); border-bottom: 1px solid #78889c; }
.panel { height: 95px; border: 1px solid #adb2ba; outline: 1px solid #eef2f6; background: linear-gradient(#e4ecf6, #e9f1f9); flex: none; display: flex; flex-direction: column; }
.panel h2 { flex: 1; margin: 0 2px 2px; padding-top: 1px; background: #d3e1f0; color: #2424da; font-size: 12.800px; line-height: 21px; text-align: center; white-space: nowrap; }
.p100 { width: 100px; } .p126 { width: 126px; } .p99 { width: 99px; } .p109 { width: 109px; } .p101 { width: 101px; } .p119 { width: 119px; }
.fx { font: 25px "Liberation Sans", sans-serif; fill: #5a6470; }
.ft { font: bold 13px "Liberation Sans", sans-serif; fill: #5a6470; }

.workspace { height: 564px; flex: none; display: flex; }
.browser { width: 191px; padding: 0 5px 0 3px; display: flex; flex-direction: column; background: #d4e1f0; border-right: 1px solid #8c98a8; }
.grip { height: 8px; margin: 0 -5px 0 -3px; border-top: 2px solid #8793a4; border-bottom: 2px solid #9ca8b8; background: #e5edf8; }
.model { height: 25px; margin-left: 1px; display: flex; justify-content: space-between; background: #fff; border: solid #777f89; border-width: 2px 0 0 2px; line-height: 23px; padding-left: 3px; font-size: 12.800px; }
.model b, .combo b { width: 15px; background: #eeeeec; border: solid #888; border-width: 0 2px 2px 0; display: flex; justify-content: center; align-items: center; }
.model b::after, .combo b::after { content: ""; border: 4px solid transparent; border-top: 5px solid #111; margin-top: 5px; }
.side-tabs { display: flex; height: 31px; margin-top: 4px; border-bottom: 7px solid #eff6fe; background: #d4e1f0; color: #2424dc; line-height: 24px; }
.side-tabs span { width: 62px; text-align: center; background: #c1d0e1; border-right: 2px solid #8a929e; padding-right: 1px; height: 22px; margin-top: 2px; line-height: 23px; }
.side-tabs span:last-child { padding-right: 6px; border-left: 1px solid #eef4fa; }
.side-tabs .active { width: 64px; height: 24px; margin: 0; background: #eff6fe; border: 0; line-height: 26px; }
.tree { height: 467px; margin-top: -1px; background: #eff7ff; border: solid #878f9b; border-width: 2px 0 0 2px; font-size: 13px; }
.tree li { height: 17.650px; line-height: 17.650px; display: flex; align-items: center; white-space: nowrap; letter-spacing: -.2px; }
.tree svg { width: 17px; height: 16px; }
.tree i { width: 20px; height: 17.650px; position: relative; flex: none; }
.tree i::before { content: ""; position: absolute; left: 10px; top: 0; height: 100%; border-left: 1px dotted #50565e; }
.tree i:not([class])::before { display: none; }
.tree i.ell::before { height: 50%; }
.tree .tee, .tree .ell { background: linear-gradient(90deg, transparent 10px, #8b9198 10px, #8b9198 18px, transparent 18px) 0 50% / 20px 1px no-repeat; }
.tree .minus::after, .tree .plus::after { content: ""; position: absolute; left: 6px; top: 4px; width: 9px; height: 9px; border: 1px solid #7b8288; background: linear-gradient(#222, #222) center / 5px 1px no-repeat, #fff; }
.tree .plus::after { background: linear-gradient(#222, #222) center / 5px 1px no-repeat, linear-gradient(#222, #222) center / 1px 5px no-repeat, #fff; }
.tiny-g { font: bold 14px "Liberation Sans", sans-serif; fill: #30a0ec; }
.search { height: 26px; line-height: 24px; background: #fff; border: solid #808894; border-width: 2px 0 0 2px; padding-left: 4px; letter-spacing: -.1px; }
.viewport { background: linear-gradient(#3239d8, #2a30ba 19%, #1f2384 43%, #15174f 62%, #070818 84%, #000 98%); }
.axis { font: 11.500px "DejaVu Sans", sans-serif; fill: #eee; }
.status { flex: 1; display: flex; justify-content: space-between; background: #e6eef8; padding: 1px 1px 0; }
.status-icons { display: flex; }

/* measurement plot */
.measure { left: 264px; top: 137px; width: 422px; height: 211px; }
.measure .titlebar { height: 29px; padding-left: 7px; gap: 4px; }
.plot-text { font: 33px "Liberation Sans", sans-serif; fill: #202020; }

/* simulation control */
.simulation { left: 815px; top: 283px; width: 260px; height: 446px; background: #e5edf8; border: 1px solid #d0d8e4; }
.simulation .titlebar { height: 28px; padding-left: 7px; gap: 4px; }
.sim-body { padding: 4px 3px 2px 2px; display: flex; flex-direction: column; flex: 1; }
.sim-body button { background: #efeeed; border: solid; border-width: 1px 2px 2px 1px; border-color: #fff #8f9194 #8f9194 #fff; }
.transport { display: flex; gap: 3px; padding-left: 3px; height: 35px; }
.transport button { width: 35px; height: 35px; flex: none; }
.transport .reload { margin-left: 61px; }
button svg { width: 100%; height: 100%; }
.options { margin: 4px 5px 0 3px; height: 244px; border: 1px solid #b4bcc8; padding: 3px 3px 0; display: flex; flex-direction: column; }
.pair { display: flex; gap: 4px; height: 23px; margin-bottom: 3.500px; flex: none; }
.combo, .field { width: 117px; height: 23px; display: flex; justify-content: space-between; background: #fff; border: solid #85888e; border-width: 2px 1px 1px 2px; font-size: 12.500px; line-height: 19px; padding-left: 3px; }
.field { line-height: 23px; }
.caption { width: 117px; line-height: 23px; font-size: 12.500px; }
.check { display: flex; align-items: center; gap: 6px; height: 26.500px; flex: none; font-size: 12.500px; white-space: nowrap; }
.options .check { position: relative; top: -2px; }
.check i { width: 12px; height: 12px; background: #fff; border: solid #888; border-width: 1px 0 0 1px; }
.check .on { display: flex; }
.check .on::after { content: ""; width: 9px; height: 4px; border: solid #111; border-width: 0 0 2px 2px; transform: rotate(-45deg); margin: 1px; }
.combo.wide { width: 239px; margin-top: -1px; flex: none; height: 24px; line-height: 20px; }
.tools { display: grid; grid-template-columns: repeat(6, 36px); column-gap: 4.300px; row-gap: 2px; border-top: 1px solid #b4bcc8; margin-top: 3px; padding-top: 4px; }
.tools button { height: 36px; }
.last-tool { grid-column: 6; }
.update { margin: 3px 0 0 2px; letter-spacing: .15px; }
.mode { height: 24px; margin-top: 2px; border: solid #a8b0bc; border-width: 1px 0 0 1px; display: flex; align-items: center; padding-left: 3px; font-size: 12.500px; }
.mode i { width: 10px; height: 10px; border-radius: 50%; background: #fff; border: 1px solid #999; border-right-color: #fff; border-bottom-color: #fff; }
.mode .chosen { background: radial-gradient(circle, #111 2px, #fff 2.500px); }
.mode span { margin: 0 11px 0 7px; }
.outputs { display: flex; justify-content: space-between; margin-top: 2px; }
.outputs button { width: 38px; height: 38px; }
.sim-body .settings { height: 31px; margin-top: 2px; font-size: 13px; }
.ink { fill: none; stroke: #151515; stroke-width: 2.200; }
.dots { fill: none; stroke: #2c5cb0; stroke-width: 3.400; stroke-dasharray: .1 6; stroke-linecap: round; }
.serif { font: bold 14px "Liberation Serif", serif; }
.abcd { font: 16px "Liberation Serif", serif; }
.nastran { font: 10.500px "Liberation Sans", sans-serif; }

/* notepad */
.notepad { left: 1037px; top: 78px; width: 163px; height: 340px; border: solid #55565c; border-width: 1px 0 1px 1px; overflow: hidden; color: #151515; font-family: "Noto Sans", "Noto Sans CJK SC", sans-serif; white-space: nowrap; }
.notepad header { display: flex; align-items: center; gap: 3px; padding-left: 6px; height: 28px; }
.notepad h1 { font-size: 12px; }
.notepad nav { display: flex; gap: 11px; height: 21px; line-height: 20px; padding-left: 4px; font-size: 12px; border-bottom: 1px solid #f0f0f0; }
.note { flex: 1; padding-left: 1px; font-size: 15.750px; line-height: 21.300px; }
.note span { font-size: 16px; letter-spacing: .35px; }
.caret { display: block; width: 1px; height: 20px; background: #111; }
.notepad footer { height: 22px; background: #f0f0f0; border-top: 1px solid #d8d8d8; padding-left: 28px; font-size: 11.500px; line-height: 21px; }
.notepad footer span { display: block; border-left: 1px solid #d4d4d4; padding-left: 8px; letter-spacing: .3px; }
.watermark { position: absolute; left: 1083px; top: 43px; font: bold 24px/32px "Liberation Sans", sans-serif; color: rgba(255, 255, 255, .82); letter-spacing: 3px; text-shadow: 1px 1px 1px rgba(200, 190, 205, .3); white-space: nowrap; }

/* taskbar */
.taskbar { position: absolute; left: 0; top: 809px; width: 1200px; height: 39px; background: #474548; display: flex; }
.taskbar-search { width: 337px; background: #f2f1f2; border: 1px solid #c8c4c8; display: flex; align-items: center; gap: 9px; padding: 0 0 2px 10px; font: 15px "Noto Sans CJK SC", sans-serif; color: #3d3d3f; }
.apps { display: flex; }
.apps i { width: 48.700px; display: flex; align-items: center; justify-content: center; position: relative; }
.apps svg { width: 24px; height: 24px; }
.apps .open::after { content: ""; position: absolute; bottom: 0; left: 4px; width: 40px; height: 3px; background: #84b2dc; }
.apps .current { background: linear-gradient(#737175, #737175) 1px 0 / 46px 100% no-repeat; }
.apps .current::after { left: 1px; width: 46px; }
```
